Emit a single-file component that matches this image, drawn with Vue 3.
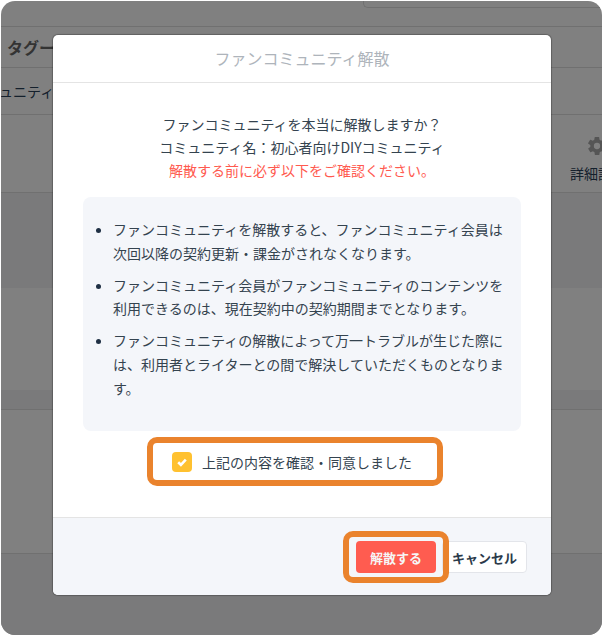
<script setup>
const notes = [
  'ファンコミュニティを解散すると、ファンコミュニティ会員は次回以降の契約更新・課金がされなくなります。',
  'ファンコミュニティ会員がファンコミュニティのコンテンツを利用できるのは、現在契約中の契約期間までとなります。',
  'ファンコミュニティの解散によって万一トラブルが生じた際には、利用者とライターとの間で解決していただくものとなります。'
]
</script>

<template>
  <div class="page">
    <div class="backdrop">
      <div class="row r1"><div class="top-card"></div></div>
      <div class="row r2"><span class="tag">タグー</span></div>
      <div class="row r3"><span class="cell">ミュニティ</span></div>
      <div class="row r4">
        <span class="detail">
          <svg class="gear" viewBox="2 2 20 20"><path d="M19.4 13a7.5 7.5 0 0 0 0-2l2.1-1.6a.5.5 0 0 0 .1-.7l-2-3.4a.5.5 0 0 0-.6-.2l-2.5 1a7.3 7.3 0 0 0-1.7-1l-.4-2.7a.5.5 0 0 0-.5-.4h-4a.5.5 0 0 0-.5.4l-.4 2.7a7.3 7.3 0 0 0-1.7 1l-2.5-1a.5.5 0 0 0-.6.2l-2 3.4a.5.5 0 0 0 .1.7L4.6 11a7.5 7.5 0 0 0 0 2l-2.1 1.6a.5.5 0 0 0-.1.7l2 3.4c.1.2.4.3.6.2l2.5-1a7.3 7.3 0 0 0 1.7 1l.4 2.7c0 .2.3.4.5.4h4c.2 0 .5-.2.5-.4l.4-2.7a7.3 7.3 0 0 0 1.7-1l2.5 1c.2.1.5 0 .6-.2l2-3.4a.5.5 0 0 0-.1-.7zM12 15.5a3.5 3.5 0 1 1 0-7 3.5 3.5 0 0 1 0 7z"/></svg>
          <span class="detail-label">詳細設定</span>
        </span>
      </div>
      <div class="band b1"></div>
      <div class="band b2"></div>
      <div class="row r6"></div>
      <div class="row r7"></div>
      <div class="band b3"></div>
    </div>

    <section class="modal">
      <header class="modal-head">ファンコミュニティ解散</header>
      <div class="modal-body">
        <p class="lead">ファンコミュニティを本当に解散しますか？</p>
        <p class="lead">コミュニティ名：初心者向けDIYコミュニティ</p>
        <p class="lead warn">解散する前に必ず以下をご確認ください。</p>
        <ul class="notes">
          <li v-for="note in notes" :key="note">{{ note }}</li>
        </ul>
        <label class="agree">
          <span class="check">
            <svg viewBox="0 0 12 12"><path d="M2.2 6.2 4.9 8.8 9.8 3.6" /></svg>
          </span>
          <span>上記の内容を確認・同意しました</span>
        </label>
      </div>
      <footer class="modal-foot">
        <span class="danger-ring"><button class="danger">解散する</button></span>
        <button class="cancel">キャンセル</button>
      </footer>
    </section>
  </div>
</template>

<style>
html, body { margin: 0; background: #fff; }
</style>

<style scoped>
.page {
  position: relative;
  width: 603px;
  height: 635px;
  overflow: hidden;
  font-family: "Noto Sans CJK JP", "Noto Sans", sans-serif;
  color: #34434f;
}
.backdrop {
  box-sizing: border-box;
  height: 634px;
  margin: 1px 0 0 1px;
  width: 601px;
  border-radius: 14px;
  background: #808080;
  overflow: hidden;
  display: flex;
  flex-direction: column;
  color: #14202c;
}
.row { box-sizing: border-box; border-bottom: 1px solid #707070; display: flex; align-items: center; flex: none; }
.band { flex: none; }
.r1 { height: 26px; align-items: flex-start; }
.top-card {
  width: 239px;
  height: 7px;
  margin-left: 362px;
  box-sizing: border-box;
  border-left: 1px solid #707070;
  border-bottom: 1px solid #707070;
  border-bottom-left-radius: 5px;
}
.r2 { height: 41px; padding-left: 6px; }
.r3 { height: 47px; }
.r4 { height: 78px; justify-content: flex-end; }
.b1 { height: 95px; background: #7a7a7b; }
.b2 { height: 102px; }
.r6 { height: 20px; background: #7a7a7b; }
.r7 { height: 144px; }
.b3 { flex: 1; background: #7a7a7b; }
.tag { font-weight: 700; font-size: 16px; color: #333; }
.cell { font-size: 14px; margin-left: -16px; white-space: nowrap; }
.detail {
  width: 32px;
  display: flex;
  flex-direction: column;
  gap: 8px;
  white-space: nowrap;
  font-size: 14px;
  padding-top: 12px;
}
.detail-label { line-height: 20px; }
.gear { width: 18px; height: 18px; fill: #555; margin-left: 18px; }
.modal {
  position: absolute;
  left: 53px;
  top: 35px;
  width: 498px;
  height: 560px;
  background: #fff;
  border-radius: 5px;
  box-shadow: 0 0 1px 1px rgba(0,0,0,.25);
  display: flex;
  flex-direction: column;
  overflow: hidden;
}
.modal-head {
  height: 48px;
  flex: none;
  box-sizing: border-box;
  border-bottom: 1px solid #e4e4e4;
  text-align: center;
  font-size: 16px;
  line-height: 47px;
  color: #aeb4bb;
}
.modal-body { flex: 1; padding: 30px 30px 0; }
.lead { margin: 0; text-align: center; font-size: 14px; line-height: 23px; }
.warn { color: #ff5a4f; }
.notes {
  margin: 15px 0 0;
  padding: 21px 10px 0 30px;
  background: #f4f6fa;
  border-radius: 8px;
  font-size: 14px;
  line-height: 23.8px;
  height: 234px;
  box-sizing: border-box;
}
.notes li { margin-bottom: 8px; }
.notes li::marker { color: #1f3044; }
.agree {
  width: 296px;
  height: 49px;
  margin: 6px 0 0 64px;
  box-sizing: border-box;
  border: 6px solid #ea832d;
  border-radius: 10px;
  display: flex;
  align-items: center;
  gap: 10px;
  padding-left: 19px;
  font-size: 14px;
}
.check {
  width: 20px;
  height: 20px;
  background: #ffc130;
  border-radius: 4px;
  display: flex;
  align-items: center;
  justify-content: center;
}
.check svg { width: 12px; height: 12px; fill: none; stroke: #fff; stroke-width: 2.6; }
.modal-foot {
  height: 78px;
  flex: none;
  box-sizing: border-box;
  background: #f4f6fa;
  border-top: 1px solid #e4e4e4;
  display: flex;
  align-items: flex-start;
  justify-content: flex-end;
  padding: 13px 24px 0 0;
}
.danger-ring {
  box-sizing: border-box;
  width: 106px;
  height: 52px;
  border: 6px solid #ea832d;
  border-radius: 10px;
  display: flex;
  align-items: center;
  justify-content: center;
  margin-right: -7px;
  position: relative;
  z-index: 1;
}
button { font-family: inherit; font-weight: 700; font-size: 13px; cursor: pointer; box-sizing: border-box; padding: 0; }
.danger { width: 80px; height: 32px; background: #ff5c50; color: #f6f6f6; border: 0; border-radius: 4px; }
.cancel { width: 85px; height: 32px; margin-top: 10px; background: #fff; border: 1px solid #e3e5ea; border-radius: 4px; color: #2b3a4a; }
</style>
